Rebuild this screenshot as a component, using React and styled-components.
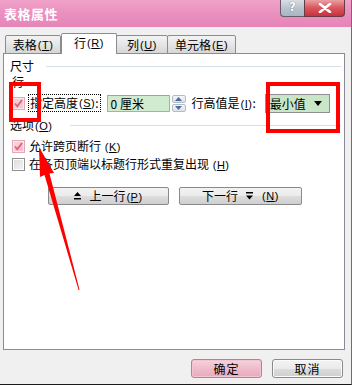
import React from "react";
import styled, { createGlobalStyle } from "styled-components";

const Global = createGlobalStyle`
  html, body {
    margin: 0;
    padding: 0;
    background: #f0f0f0;
  }
  body {
    font-family: "Noto Sans CJK SC", "DejaVu Sans", sans-serif;
    font-size: 12px;
    color: #000;
  }
`;

const Key = ({ k }) => (
  <Mnemonic>
    (<u>{k}</u>)
  </Mnemonic>
);

const UpIcon = () => (
  <svg width="7" height="8" viewBox="0 0 7 8">
    <path d="M3.5 0 L7 4 L0 4 Z" fill="#000" />
    <rect x="0" y="6" width="7" height="1.5" fill="#000" />
  </svg>
);

const DownIcon = () => (
  <svg width="7" height="8" viewBox="0 0 7 8">
    <rect x="0" y="0" width="7" height="1.5" fill="#000" />
    <path d="M0 3.5 L7 3.5 L3.5 7.5 Z" fill="#000" />
  </svg>
);

const Check = ({ checked }) => (
  <CheckBox $checked={checked}>
    {checked && (
      <svg width="11" height="11" viewBox="0 0 11 11">
        <path
          d="M2 5.5 L4.3 8.3 L9 2"
          stroke="#e0607c"
          strokeWidth="1.8"
          fill="none"
        />
      </svg>
    )}
  </CheckBox>
);

const App = () => {
  return (
    <>
      <Global />
      <Window>
        <TitleBar>
          <Title>表格属性</Title>
          <Controls>
            <HelpBtn>?</HelpBtn>
            <CloseBtn>
              <svg width="14" height="10" viewBox="0 0 14 10">
                <path
                  d="M2 1 L12 9 M12 1 L2 9"
                  stroke="#fff"
                  strokeWidth="2.6"
                  strokeLinecap="round"
                />
              </svg>
            </CloseBtn>
          </Controls>
        </TitleBar>

        <Body>
          <Tabs>
            <Tab $w={56}>
              表格<Key k="T" />
            </Tab>
            <Tab $w={56} $active>
              行<Key k="R" />
            </Tab>
            <Tab $w={52}>
              列<Key k="U" />
            </Tab>
            <Tab $w={69}>
              单元格<Key k="E" />
            </Tab>
          </Tabs>

          <Panel>
            <SectionHead $gap={12}>
              <span>尺寸</span>
              <Rule />
            </SectionHead>
            <SubLabel>行</SubLabel>
            <ControlRow>
              <Check checked />
              <FocusLabel>
                指定高度<Key k="S" />:
              </FocusLabel>
              <NumberInput>0 厘米</NumberInput>
              <Spinner>
                <SpinHalf>
                  <svg width="7" height="4" viewBox="0 0 7 4">
                    <path d="M3.5 0 L7 4 L0 4 Z" fill="#4a6d9c" />
                  </svg>
                </SpinHalf>
                <SpinHalf>
                  <svg width="7" height="4" viewBox="0 0 7 4">
                    <path d="M0 0 L7 0 L3.5 4 Z" fill="#4a6d9c" />
                  </svg>
                </SpinHalf>
              </Spinner>
              <PlainLabel>
                行高值是<Key k="I" />:
              </PlainLabel>
              <Select>
                <span>最小值</span>
                <svg width="8" height="5" viewBox="0 0 8 5">
                  <path d="M0 0 L8 0 L4 5 Z" fill="#000" />
                </svg>
              </Select>
            </ControlRow>

            <SectionHead $gap={18} $top={4}>
              <span>
                选项<Key k="O" />
              </span>
              <Rule />
            </SectionHead>
            <CheckRow $top={5}>
              <Check checked />
              <span>
                允许跨页断行 <Key k="K" />
              </span>
            </CheckRow>
            <CheckRow>
              <Check />
              <span>
                在各页顶端以标题行形式重复出现 <Key k="H" />
              </span>
            </CheckRow>
            <NavRow>
              <NavButton $w={121}>
                <UpIcon />
                <span>
                  上一行<Key k="P" />
                </span>
              </NavButton>
              <NavButton $w={123}>
                <span>下一行</span>
                <DownIcon />
                <Key k="N" />
              </NavButton>
            </NavRow>
          </Panel>

          <Footer>
            <DialogButton $primary>确定</DialogButton>
            <DialogButton>取消</DialogButton>
          </Footer>
        </Body>

        <Overlay width="352" height="385" viewBox="0 0 352 385">
          <rect x="11" y="84" width="28" height="36" fill="none" stroke="#ff0000" strokeWidth="4" />
          <rect x="268" y="84" width="70" height="47" fill="none" stroke="#ff0000" strokeWidth="4" />
          <polygon
            points="39,147 54,173 49.5,173.5 79.6,290 78.6,290 44.5,175 40,177"
            fill="#ff0000"
          />
        </Overlay>
      </Window>
    </>
  );
};

export default App;

const Window = styled.div`
  position: relative;
  width: 352px;
  height: 385px;
  box-sizing: border-box;
  background: #f0f0f0;
  border-right: 1px solid #6e6e6e;
  border-bottom: 1px solid #1a1a1a;
  overflow: hidden;
`;

const TitleBar = styled.div`
  height: 27px;
  display: flex;
  align-items: flex-start;
  justify-content: space-between;
  background: linear-gradient(180deg, #f0a2c9 0%, #ea91c0 45%, #e585b7 100%);
`;

const Title = styled.div`
  margin: 6px 0 0 4px;
  color: #fff;
  font-weight: 700;
  font-size: 13px;
  line-height: 16px;
  letter-spacing: 0.5px;
`;

const Controls = styled.div`
  display: flex;
  margin-right: 6px;
`;

const HelpBtn = styled.div`
  width: 24px;
  height: 17px;
  box-sizing: border-box;
  border: 1px solid #6a5a66;
  border-top: none;
  border-right: none;
  border-radius: 0 0 0 4px;
  background: linear-gradient(180deg, #d8dde6 0%, #b7c1cd 55%, #a9b5c3 100%);
  color: #fff;
  font-family: "DejaVu Sans", sans-serif;
  font-weight: 700;
  font-size: 12px;
  line-height: 15px;
  text-align: center;
  text-shadow: 0 0 1px #445;
`;

const CloseBtn = styled.div`
  width: 41px;
  height: 17px;
  box-sizing: border-box;
  border: 1px solid #6a3a44;
  border-top: none;
  border-radius: 0 0 4px 0;
  background: linear-gradient(180deg, #e9a0a3 0%, #d9555c 50%, #c8323c 100%);
  display: flex;
  align-items: center;
  justify-content: center;
`;

const Body = styled.div`
  padding-top: 6px;
`;

const Tabs = styled.div`
  display: flex;
  align-items: flex-end;
  height: 21px;
  margin-left: 5px;
  position: relative;
  z-index: 1;
  margin-bottom: -1px;
`;

const Tab = styled.div`
  width: ${(p) => p.$w}px;
  height: ${(p) => (p.$active ? 21 : 19)}px;
  box-sizing: border-box;
  border: 1px solid #898c95;
  border-bottom: ${(p) => (p.$active ? "none" : "1px solid #898c95")};
  border-radius: 2px 2px 0 0;
  margin-left: ${(p) => (p.$active ? 0 : -1)}px;
  background: ${(p) =>
    p.$active ? "#fff" : "linear-gradient(180deg, #f3f3f3 0%, #e6e6e6 50%, #d6d6d6 100%)"};
  display: flex;
  align-items: center;
  justify-content: center;
  line-height: 16px;
  padding-bottom: ${(p) => (p.$active ? 2 : 0)}px;
  &:first-child {
    margin-left: 0;
  }
`;

const Mnemonic = styled.span`
  font-family: "Liberation Sans", sans-serif;
  font-size: 11px;
  margin-left: 1px;
  letter-spacing: 0.5px;
  u {
    text-underline-offset: 1px;
  }
`;

const Panel = styled.div`
  margin-left: 3px;
  width: 342px;
  height: 297px;
  box-sizing: border-box;
  border: 1px solid #898c95;
  background: #fff;
  padding: 5px 3px 0 6px;
  display: flex;
  flex-direction: column;
`;

const SectionHead = styled.div`
  height: 14px;
  margin-top: ${(p) => p.$top || 0}px;
  display: flex;
  align-items: center;
  gap: ${(p) => p.$gap}px;
  line-height: 14px;
`;

const Rule = styled.div`
  flex: 1;
  height: 1px;
  background: #d5dfe5;
`;

const SubLabel = styled.div`
  height: 14px;
  margin-top: 2px;
  padding-left: 2px;
  line-height: 14px;
`;

const ControlRow = styled.div`
  height: 22px;
  margin-top: 3px;
  padding-left: 2px;
  display: flex;
  align-items: center;
`;

const CheckBox = styled.div`
  width: 13px;
  height: 13px;
  box-sizing: border-box;
  border: 1px solid ${(p) => (p.$checked ? "#e6a7b6" : "#8f8f8f")};
  background: ${(p) =>
    p.$checked
      ? "linear-gradient(135deg, #f7d5dc 0%, #f2c3cd 100%)"
      : "linear-gradient(135deg, #dcdcdc 0%, #f4f4f4 100%)"};
  box-shadow: inset 0 0 0 1px ${(p) => (p.$checked ? "#fbe6ea" : "#fff")};
  display: flex;
  align-items: center;
  justify-content: center;
  flex-shrink: 0;
`;

const FocusLabel = styled.div`
  margin-left: 3px;
  height: 16px;
  padding: 0 1px;
  border: 1px dotted #000;
  display: flex;
  align-items: center;
  line-height: 14px;
`;

const NumberInput = styled.div`
  margin-left: 6px;
  width: 63px;
  height: 17px;
  box-sizing: border-box;
  border: 1px solid #abadb3;
  border-top-color: #9ea3ab;
  background: #d1ebd1;
  padding-left: 3px;
  line-height: 15px;
`;

const Spinner = styled.div`
  margin-left: 2px;
  width: 14px;
  height: 17px;
  display: flex;
  flex-direction: column;
  gap: 1px;
`;

const SpinHalf = styled.div`
  flex: 1;
  box-sizing: border-box;
  border: 1px solid #b5bcc7;
  border-radius: 2px;
  background: linear-gradient(180deg, #f5f6f8 0%, #dde1e7 100%);
  display: flex;
  align-items: center;
  justify-content: center;
`;

const PlainLabel = styled.div`
  margin-left: 6px;
  line-height: 14px;
`;

const Select = styled.div`
  margin-left: 9px;
  width: 65px;
  height: 19px;
  box-sizing: border-box;
  border: 1px solid #8e8f8f;
  background: #c9e6c9;
  display: flex;
  align-items: center;
  justify-content: space-between;
  padding: 0 7px 0 4px;
  font-size: 12px;
`;

const CheckRow = styled.div`
  height: 18px;
  margin-top: ${(p) => p.$top || 0}px;
  padding-left: 2px;
  display: flex;
  align-items: center;
  gap: 4px;
  line-height: 14px;
`;

const NavRow = styled.div`
  margin-top: 14px;
  padding-left: 38px;
  display: flex;
  gap: 10px;
`;

const NavButton = styled.div`
  width: ${(p) => p.$w}px;
  height: 18px;
  box-sizing: border-box;
  border: 1px solid #8a8a8a;
  border-radius: 2px;
  background: linear-gradient(180deg, #f2f2f2 0%, #ebebeb 50%, #dddddd 51%, #cfcfcf 100%);
  display: flex;
  align-items: center;
  justify-content: center;
  gap: 8px;
  line-height: 14px;
`;

const Footer = styled.div`
  display: flex;
  justify-content: flex-end;
  gap: 10px;
  padding: 9px 8px 0 0;
`;

const DialogButton = styled.div`
  width: 71px;
  height: 19px;
  box-sizing: border-box;
  border: 1px solid ${(p) => (p.$primary ? "#d0748f" : "#8a8a8a")};
  border-radius: 3px;
  background: ${(p) =>
    p.$primary
      ? "linear-gradient(180deg, #f6d3dc 0%, #eebccb 50%, #e8a9bd 100%)"
      : "linear-gradient(180deg, #f3f3f3 0%, #ebebeb 50%, #dcdcdc 51%, #cfcfcf 100%)"};
  box-shadow: inset 0 0 0 1px ${(p) => (p.$primary ? "#f3c4d2" : "#fbfbfb")};
  display: flex;
  align-items: center;
  justify-content: center;
  line-height: 14px;
  letter-spacing: 1px;
`;

const Overlay = styled.svg`
  position: absolute;
  left: 0;
  top: 0;
  pointer-events: none;
`;
